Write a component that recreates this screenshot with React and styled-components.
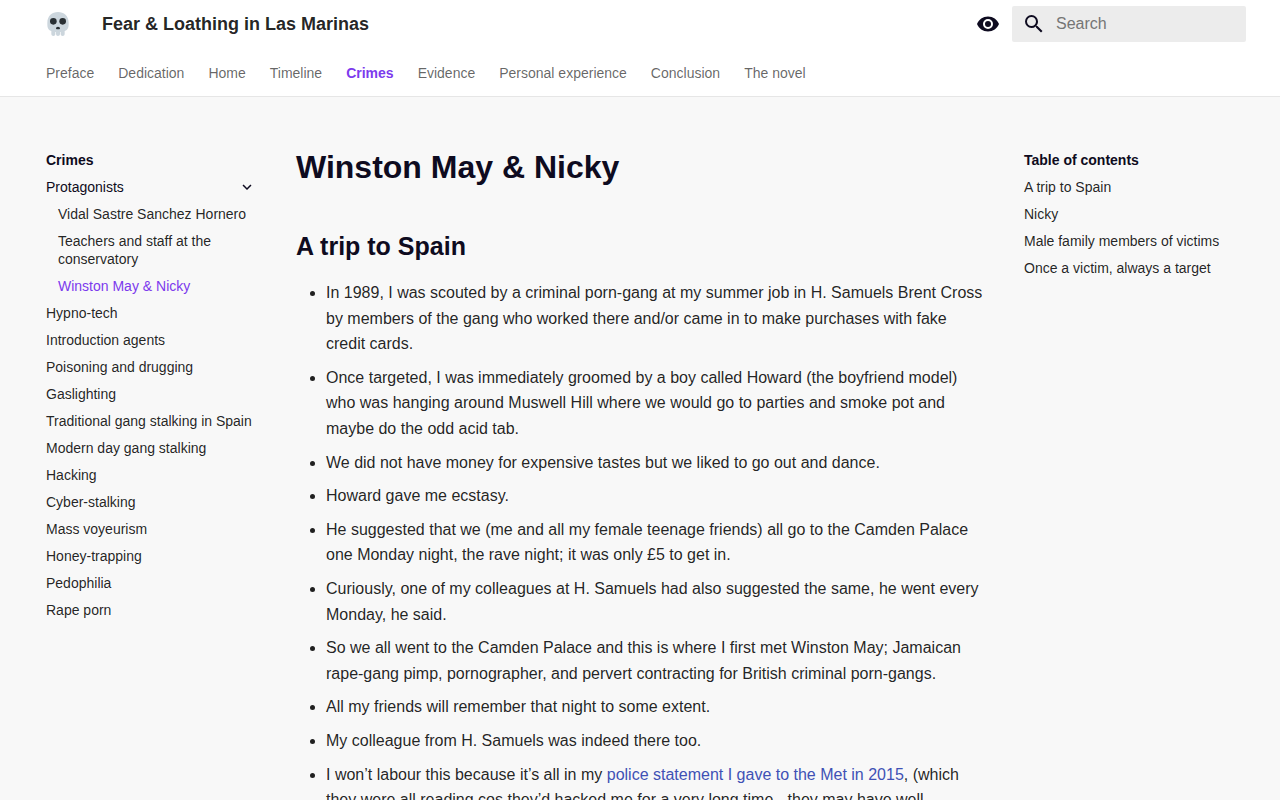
import styled, { createGlobalStyle, ThemeProvider } from 'styled-components';

const theme = {
    colors: {
        text: 'rgba(0, 0, 0, 0.87)',
        heading: '#0e0b20',
        muted: 'rgba(0, 0, 0, 0.61)',
        accent: '#7c3aed',
        link: '#4051b5',
        pageBg: '#f8f8f8',
        headerBg: '#ffffff',
        searchBg: '#ececec',
        border: '#e6e6e6',
    },
};

const GlobalStyle = createGlobalStyle`
    *,
    *::before,
    *::after {
        box-sizing: border-box;
    }

    html {
        scrollbar-width: none;
    }

    body {
        margin: 0;
        background: ${({ theme }) => theme.colors.pageBg};
        color: ${({ theme }) => theme.colors.text};
        font-family: 'Liberation Sans', Arial, sans-serif;
        font-size: 16px;
    }
`;

const Header = styled.header`
    background: ${({ theme }) => theme.colors.headerBg};
    border-bottom: 1px solid ${({ theme }) => theme.colors.border};
`;

const Grid = styled.div`
    max-width: 1220px;
    margin: 0 auto;
`;

const TopBar = styled.div`
    display: flex;
    align-items: center;
    height: 48px;
    padding: 0 4px 0 16px;
`;

const Logo = styled.a`
    display: flex;
    margin-right: 32px;
`;

const SiteTitle = styled.span`
    flex: 1;
    font-size: 18px;
    font-weight: 700;
    line-height: 48px;
`;

const IconButton = styled.button`
    display: flex;
    padding: 0;
    margin-right: 12px;
    border: 0;
    background: none;
    color: ${({ theme }) => theme.colors.heading};
    cursor: pointer;
`;

const SearchForm = styled.form`
    display: flex;
    align-items: center;
    gap: 10px;
    width: 234px;
    height: 36px;
    padding: 0 10px;
    border-radius: 2px;
    background: ${({ theme }) => theme.colors.searchBg};
`;

const SearchLabel = styled.label`
    display: flex;
    color: ${({ theme }) => theme.colors.heading};
`;

const SearchInput = styled.input`
    flex: 1;
    min-width: 0;
    height: 36px;
    padding: 0;
    border: 0;
    outline: 0;
    background: transparent;
    color: ${({ theme }) => theme.colors.text};
    font: inherit;

    &::placeholder {
        color: #757575;
    }
`;

const Tabs = styled.nav`
    display: flex;
    gap: 24px;
    height: 48px;
    padding: 16px 16px 0;
`;

const Tab = styled.a`
    color: ${({ $active, theme }) =>
        $active ? theme.colors.accent : theme.colors.muted};
    font-size: 14px;
    font-weight: ${({ $active }) => ($active ? 700 : 400)};
    line-height: 18px;
    text-decoration: none;
    white-space: nowrap;
`;

const Main = styled(Grid)`
    display: grid;
    grid-template-columns: 242px minmax(0, 1fr) 242px;
    padding-top: 30px;
`;

const Sidebar = styled.nav`
    padding: 24px 16px;
    font-size: 14px;
    line-height: 18px;
`;

const SidebarTitle = styled.div`
    color: ${({ theme }) => theme.colors.heading};
    font-weight: 700;
`;

const NavList = styled.ul`
    margin: 0;
    padding: 0;
    padding-left: ${({ $nested }) => ($nested ? '12px' : '0')};
    list-style: none;
`;

const NavItem = styled.li`
    margin-top: 9px;
`;

const NavLink = styled.a`
    display: block;
    color: ${({ $active, theme }) =>
        $active ? theme.colors.accent : theme.colors.text};
    text-decoration: none;
`;

const NavToggle = styled.button`
    display: flex;
    align-items: center;
    justify-content: space-between;
    width: 100%;
    padding: 0;
    border: 0;
    background: none;
    color: ${({ theme }) => theme.colors.heading};
    font: inherit;
    text-align: left;
    cursor: pointer;
`;

const Article = styled.article`
    padding: 19px 24px 24px;
`;

const Title = styled.h1`
    margin: 0 0 40px;
    color: ${({ theme }) => theme.colors.heading};
    font-size: 32px;
    line-height: 42px;
`;

const Subtitle = styled.h2`
    margin: 0 0 16px;
    color: ${({ theme }) => theme.colors.heading};
    font-size: 25px;
    line-height: 36px;
`;

const BulletList = styled.ul`
    margin: 0;
    padding-left: 30px;
    line-height: 1.6;
`;

const Bullet = styled.li`
    margin-bottom: 8px;
`;

const TextLink = styled.a`
    color: ${({ theme }) => theme.colors.link};
    text-decoration: none;
`;

const SkullIcon = () => (
    <svg width="24" height="24" viewBox="0 0 36 36" aria-hidden="true">
        <path
            fill="#CCD6DD"
            d="M34 16C34 6 26.837 0 18 0 9.164 0 2 6 2 16c0 5.574.002 10.388 6 12.64V33c0 1.657 1.343 3 3 3s3-1.343 3-3v-3.155c.324.027.659.05 1 .07V33c0 1.657 1.343 3 3 3s3-1.343 3-3v-3.085c.342-.021.676-.043 1-.07V33c0 1.657 1.344 3 3 3 1.657 0 3-1.343 3-3v-4.36c5.998-2.252 6-7.066 6-12.64z"
        />
        <circle fill="#292F33" cx="11" cy="14" r="5" />
        <circle fill="#292F33" cx="25" cy="14" r="5" />
        <path
            fill="#292F33"
            d="M19.903 23.062C19.651 22.449 18.9 22 18 22s-1.652.449-1.903 1.062C15.452 23.298 15 23.765 15 24.5c0 1 .8 1.5 1.6 1.5.6 0 1-.3 1.4-.3s.8.3 1.4.3c.8 0 1.6-.5 1.6-1.5 0-.735-.452-1.202-1.097-1.438z"
        />
    </svg>
);

const EyeIcon = () => (
    <svg width="24" height="24" viewBox="0 0 24 24" fill="currentColor">
        <path d="M12 9a3 3 0 0 0-3 3 3 3 0 0 0 3 3 3 3 0 0 0 3-3 3 3 0 0 0-3-3m0 8a5 5 0 0 1-5-5 5 5 0 0 1 5-5 5 5 0 0 1 5 5 5 5 0 0 1-5 5m0-12.5C7 4.5 2.73 7.61 1 12c1.73 4.39 6 7.5 11 7.5s9.27-3.11 11-7.5c-1.73-4.39-6-7.5-11-7.5z" />
    </svg>
);

const SearchIcon = () => (
    <svg width="24" height="24" viewBox="0 0 24 24" fill="currentColor">
        <path d="M9.5 3A6.5 6.5 0 0 1 16 9.5c0 1.61-.59 3.09-1.56 4.23l.27.27h.79l5 5-1.5 1.5-5-5v-.79l-.27-.27A6.516 6.516 0 0 1 9.5 16 6.5 6.5 0 0 1 3 9.5 6.5 6.5 0 0 1 9.5 3m0 2C7 5 5 7 5 9.5S7 14 9.5 14 14 12 14 9.5 12 5 9.5 5z" />
    </svg>
);

const ChevronIcon = () => (
    <svg width="18" height="18" viewBox="0 0 24 24" fill="currentColor">
        <path d="M7.41 8.58 12 13.17l4.59-4.59L18 10l-6 6-6-6z" />
    </svg>
);

const tabs = [
    'Preface',
    'Dedication',
    'Home',
    'Timeline',
    'Crimes',
    'Evidence',
    'Personal experience',
    'Conclusion',
    'The novel',
];

const protagonists = [
    'Vidal Sastre Sanchez Hornero',
    'Teachers and staff at the conservatory',
    'Winston May & Nicky',
];

const sections = [
    'Hypno-tech',
    'Introduction agents',
    'Poisoning and drugging',
    'Gaslighting',
    'Traditional gang stalking in Spain',
    'Modern day gang stalking',
    'Hacking',
    'Cyber-stalking',
    'Mass voyeurism',
    'Honey-trapping',
    'Pedophilia',
    'Rape porn',
];

const contents = [
    'A trip to Spain',
    'Nicky',
    'Male family members of victims',
    'Once a victim, always a target',
];

const bullets = [
    'In 1989, I was scouted by a criminal porn-gang at my summer job in H. Samuels Brent Cross by members of the gang who worked there and/or came in to make purchases with fake credit cards.',
    'Once targeted, I was immediately groomed by a boy called Howard (the boyfriend model) who was hanging around Muswell Hill where we would go to parties and smoke pot and maybe do the odd acid tab.',
    'We did not have money for expensive tastes but we liked to go out and dance.',
    'Howard gave me ecstasy.',
    'He suggested that we (me and all my female teenage friends) all go to the Camden Palace one Monday night, the rave night; it was only £5 to get in.',
    'Curiously, one of my colleagues at H. Samuels had also suggested the same, he went every Monday, he said.',
    'So we all went to the Camden Palace and this is where I first met Winston May; Jamaican rape-gang pimp, pornographer, and pervert contracting for British criminal porn-gangs.',
    'All my friends will remember that night to some extent.',
    'My colleague from H. Samuels was indeed there too.',
];

const NavLinks = ({ items, active }) =>
    items.map((item) => (
        <NavItem key={item}>
            <NavLink href="#" $active={item === active}>
                {item}
            </NavLink>
        </NavItem>
    ));

const App = () => (
    <ThemeProvider theme={theme}>
        <GlobalStyle />
        <Header>
            <Grid>
                <TopBar>
                    <Logo href="#" aria-label="Fear & Loathing in Las Marinas">
                        <SkullIcon />
                    </Logo>
                    <SiteTitle>Fear &amp; Loathing in Las Marinas</SiteTitle>
                    <IconButton type="button" aria-label="Switch theme">
                        <EyeIcon />
                    </IconButton>
                    <SearchForm role="search">
                        <SearchLabel htmlFor="search" aria-label="Search">
                            <SearchIcon />
                        </SearchLabel>
                        <SearchInput
                            id="search"
                            type="text"
                            placeholder="Search"
                        />
                    </SearchForm>
                </TopBar>
                <Tabs aria-label="Tabs">
                    {tabs.map((tab) => (
                        <Tab key={tab} href="#" $active={tab === 'Crimes'}>
                            {tab}
                        </Tab>
                    ))}
                </Tabs>
            </Grid>
        </Header>
        <Main as="main">
            <Sidebar aria-label="Navigation">
                <SidebarTitle>Crimes</SidebarTitle>
                <NavList>
                    <NavItem>
                        <NavToggle type="button" aria-expanded="true">
                            Protagonists
                            <ChevronIcon />
                        </NavToggle>
                        <NavList $nested>
                            <NavLinks
                                items={protagonists}
                                active="Winston May & Nicky"
                            />
                        </NavList>
                    </NavItem>
                    <NavLinks items={sections} />
                </NavList>
            </Sidebar>
            <Article>
                <Title>Winston May &amp; Nicky</Title>
                <Subtitle>A trip to Spain</Subtitle>
                <BulletList>
                    {bullets.map((bullet) => (
                        <Bullet key={bullet}>{bullet}</Bullet>
                    ))}
                    <Bullet>
                        I won’t labour this because it’s all in my{' '}
                        <TextLink href="#">
                            police statement I gave to the Met in 2015
                        </TextLink>
                        , (which they were all reading cos they’d hacked me for
                        a very long time - they may have well
                    </Bullet>
                </BulletList>
            </Article>
            <Sidebar aria-label="Table of contents">
                <SidebarTitle>Table of contents</SidebarTitle>
                <NavList>
                    <NavLinks items={contents} />
                </NavList>
            </Sidebar>
        </Main>
    </ThemeProvider>
);

export default App;
